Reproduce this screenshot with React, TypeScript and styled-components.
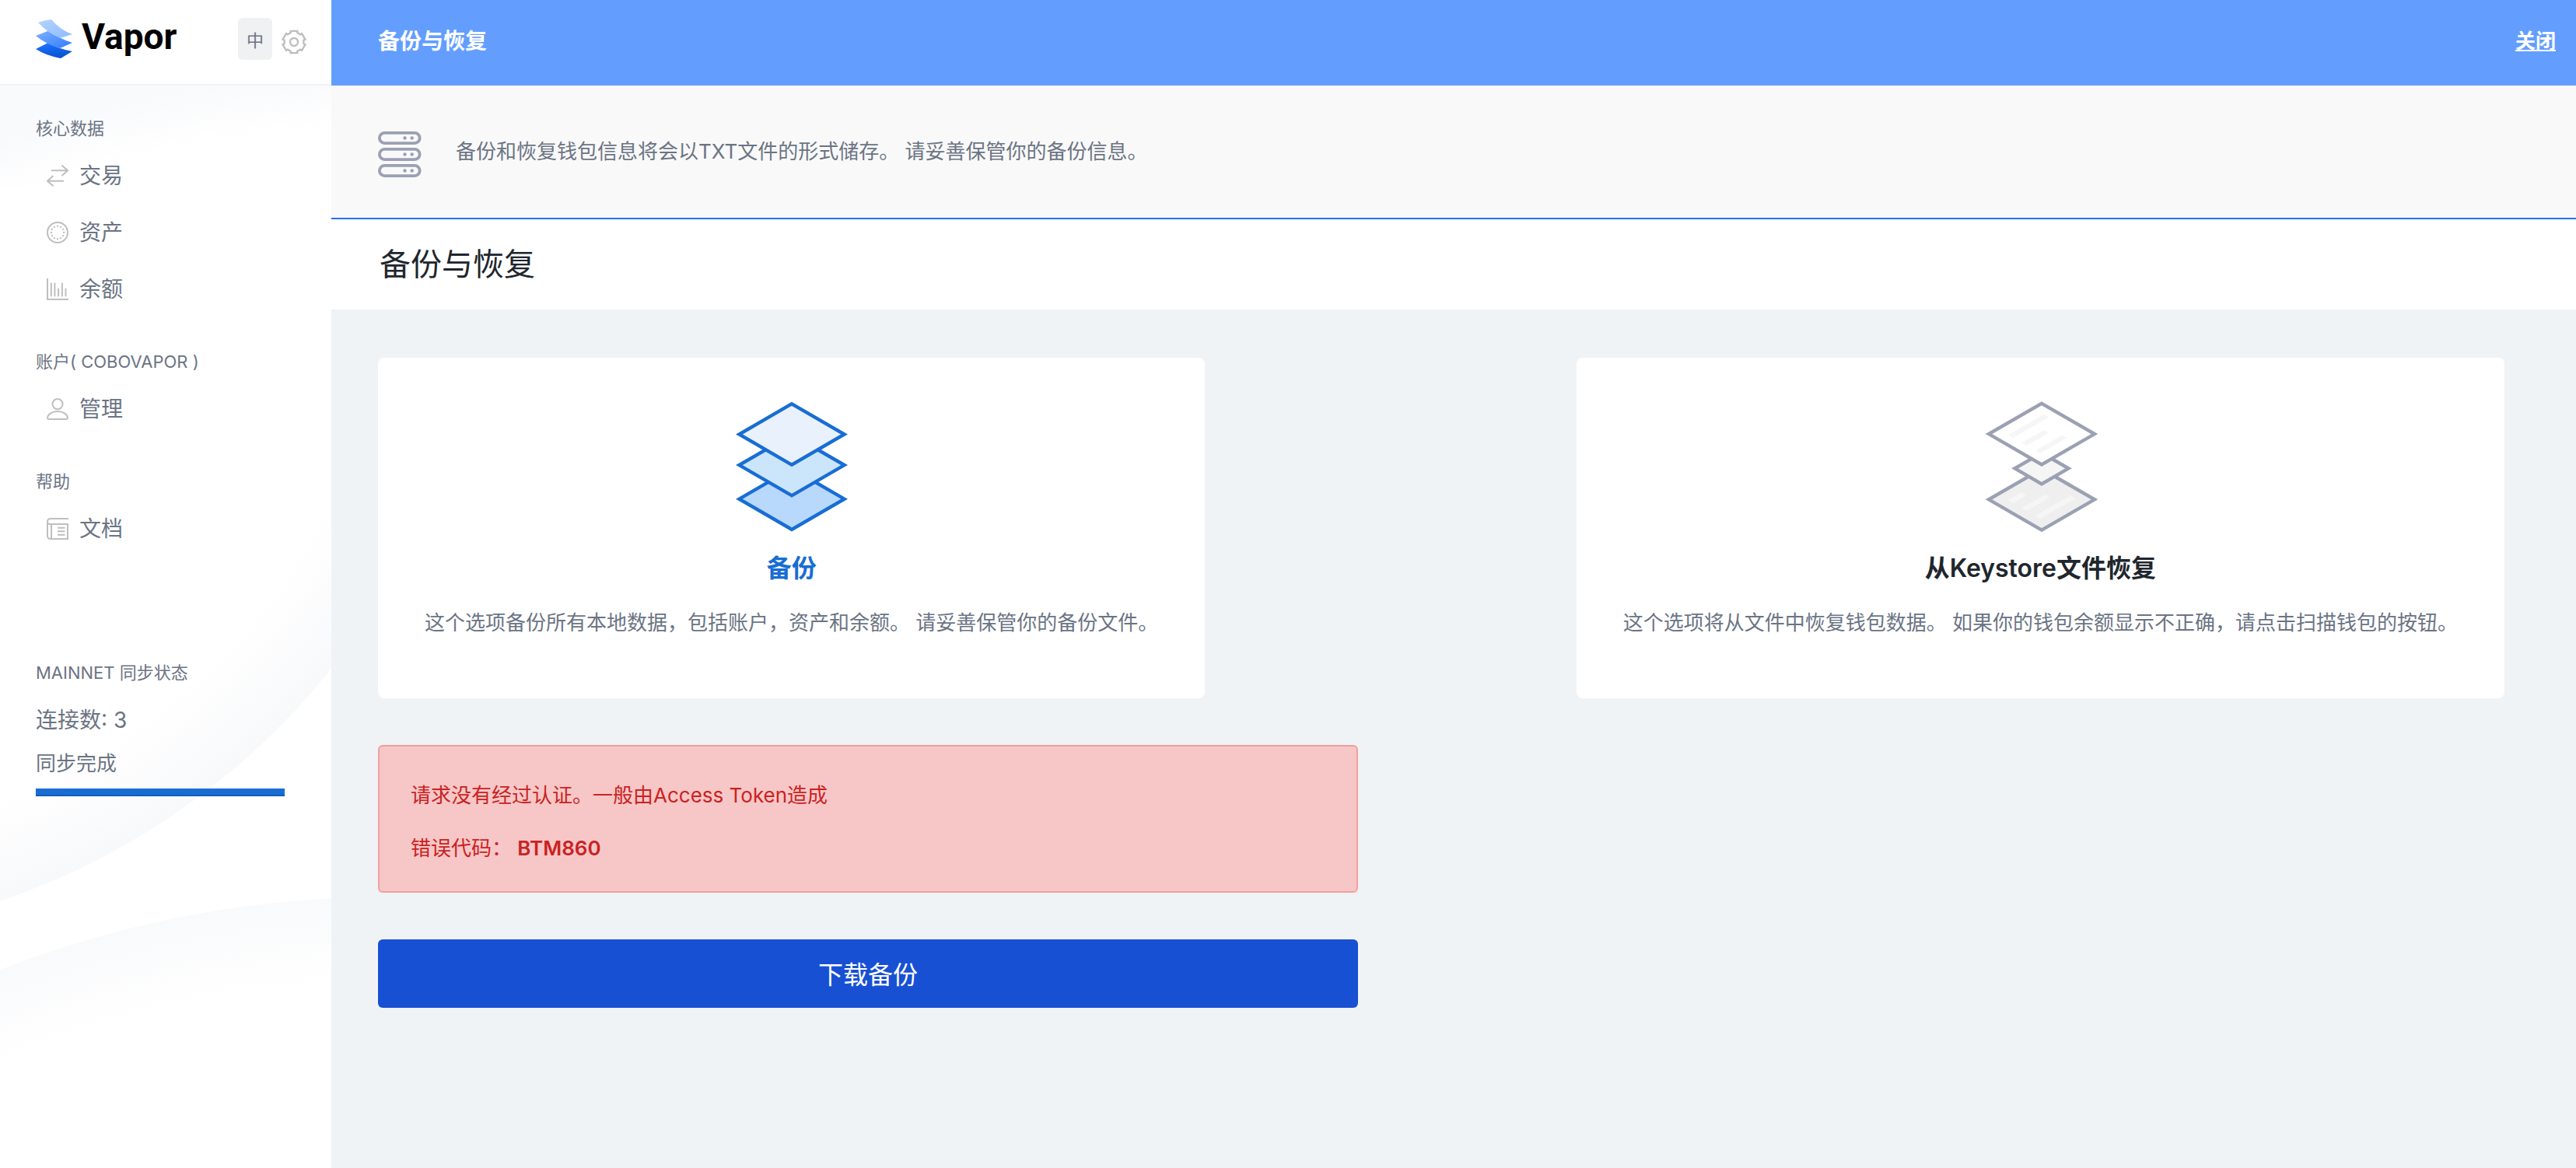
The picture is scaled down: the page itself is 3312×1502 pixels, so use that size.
import React from 'react';
import styled, { createGlobalStyle } from 'styled-components';

const GlobalStyle = createGlobalStyle`
  *, *::before, *::after { box-sizing: border-box; }
  body {
    margin: 0;
    background: #eff3f6;
    color: #6b7484;
    font-family: Inter, "Noto Sans CJK SC", sans-serif;
    font-size: 26px;
    line-height: 40px;
  }
  h1, h2, h3, p, ul { margin: 0; padding: 0; font-weight: 400; }
  ul { list-style: none; }
  button { font-family: inherit; border: 0; cursor: pointer; }
  a { color: inherit; text-decoration: none; }
  svg { display: block; flex: none; }
`;

const Shell = styled.div`
  display: flex;
  min-height: 100vh;
`;

const Sidebar = styled.aside`
  flex: 0 0 426px;
  background:
    radial-gradient(circle at 496px 1530px, transparent 1366px, #f9fafc 1436px) 0 0 / 100% 240px no-repeat,
    radial-gradient(circle at -300px 278px, transparent 810px, #f8f9fb 930px, transparent 931px),
    radial-gradient(circle at 496px 2512px, transparent 1248px, #f9fafc 1358px, transparent 1359px),
    #ffffff;
`;

const Brand = styled.header`
  display: flex;
  align-items: center;
  height: 110px;
  padding: 0 32px 8px 46px;
  background: #ffffff;
  border-bottom: 2px solid #f2f3f5;
`;

const BrandName = styled.span`
  flex: 1;
  margin-left: 12px;
  padding-bottom: 6px;
  color: #000000;
  font-family: Roboto, sans-serif;
  font-size: 46px;
  font-weight: 700;
  line-height: 54px;
`;

const LanguageButton = styled.button`
  width: 44px;
  height: 54px;
  padding: 0;
  margin-right: 12px;
  border-radius: 6px;
  background: #f0f1f3;
  color: #6b7484;
  font-size: 22px;
`;

const SettingsButton = styled.button`
  padding: 8px 0 0;
  background: none;
`;

const SideBody = styled.div`
  padding: 39px 60px 0 46px;
`;

const Section = styled.section`
  margin-bottom: 41px;
`;

const SectionLabel = styled.h2`
  margin-bottom: 8px;
  font-size: 22px;
  line-height: 32px;
`;

const NavLink = styled.a`
  display: flex;
  align-items: center;
  gap: 14px;
  height: 73px;
  padding-left: 14px;
  font-size: 28px;
`;

const Sync = styled.section`
  padding-top: 92px;
`;

const SyncLine = styled.p<{ $size: number }>`
  font-size: ${(p) => p.$size}px;
  line-height: 55px;
`;

const SyncList = styled.div`
  padding: 10px 0 5px;
`;

const Progress = styled.div`
  height: 10px;
  background: #186dd4;
  border-bottom: 2px solid #145cb3;
`;

const Main = styled.main`
  flex: 1;
  min-width: 0;
`;

const TopBar = styled.header`
  display: flex;
  justify-content: space-between;
  align-items: center;
  height: 110px;
  padding: 0 26px 4px 60px;
  background: #639eff;
  color: #ffffff;
`;

const TopTitle = styled.h1`
  font-size: 28px;
  font-weight: 700;
`;

const CloseLink = styled.a`
  font-weight: 700;
  text-decoration: underline;
`;

const Notice = styled.div`
  display: flex;
  align-items: center;
  gap: 44px;
  height: 172px;
  padding: 8px 60px 0;
  background: #f9f9f9;
  border-bottom: 2px solid #246fff;
`;

const NoticeText = styled.p`
  padding-bottom: 8px;
`;

const TitleBand = styled.div`
  padding: 28px 60px;
  background: #ffffff;
`;

const PageTitle = styled.h2`
  padding-left: 2px;
  color: #20262d;
  font-size: 40px;
  line-height: 60px;
`;

const Content = styled.div`
  display: flex;
  flex-direction: column;
  gap: 60px;
  padding: 62px 92px 60px 60px;
`;

const Options = styled.div`
  display: flex;
  justify-content: space-between;
`;

const OptionCard = styled.button`
  display: flex;
  flex-direction: column;
  align-items: center;
  padding: 56px 60px 77px;
  border-radius: 8px;
  background: #ffffff;
  color: #6b7484;
  font-size: 26px;
  line-height: 40px;
`;

const OptionTitle = styled.strong<{ $active?: boolean }>`
  margin: 23px 0 26px;
  color: ${(p) => (p.$active ? '#186dd4' : '#20262d')};
  font-size: 32px;
  font-weight: 600;
  line-height: 48px;
`;

const Alert = styled.div`
  display: flex;
  flex-direction: column;
  gap: 28px;
  max-width: 1260px;
  padding: 43px 40px 35px;
  border: 2px solid #f19e9e;
  border-radius: 6px;
  background: #f7c7c7;
  color: #ca2222;
`;

const ErrorCode = styled.strong`
  font-weight: 600;
`;

const DownloadButton = styled.button`
  width: 100%;
  max-width: 1260px;
  height: 88px;
  padding: 0 0 2px;
  border-radius: 6px;
  background: #1850d3;
  color: #ffffff;
  font-size: 32px;
`;

const ICON = '#bfbfbf';

function LogoMark() {
  return (
    <svg width="47" height="50" viewBox="0 0 47 50" aria-hidden="true">
      <defs>
        <linearGradient id="lg1" x1="0" y1="0" x2="1" y2="1">
          <stop offset="0" stopColor="#b4d3ff" />
          <stop offset="1" stopColor="#8fbbff" />
        </linearGradient>
        <linearGradient id="lg2" x1="0" y1="0" x2="1" y2="1">
          <stop offset="0" stopColor="#7fb2ff" />
          <stop offset="1" stopColor="#2f7bff" />
        </linearGradient>
        <linearGradient id="lg3" x1="0.3" y1="0" x2="0.6" y2="1">
          <stop offset="0" stopColor="#1f74fb" />
          <stop offset="1" stopColor="#0650d0" />
        </linearGradient>
      </defs>
      <path d="M0 38 L16 30 Q26 37 47 41 L32 50 Q12 46 0 38Z" fill="url(#lg3)" />
      <path d="M0 21 L18 14 Q30 25 47 30 L31 37 Q13 32 0 21Z" fill="url(#lg2)" />
      <path d="M3 4 Q11 1 20 0 Q32 14 47 19 Q38 22 31 24 Q15 17 3 4Z" fill="url(#lg1)" />
    </svg>
  );
}

function gearPath() {
  const points: string[] = [];
  for (let i = 0; i < 6; i += 1) {
    const mid = -90 + i * 60;
    [[-20, 12.6], [-17, 14.8], [17, 14.8], [20, 12.6]].forEach(([offset, radius]) => {
      const a = ((mid + offset) * Math.PI) / 180;
      points.push(`${(16 + radius * Math.cos(a)).toFixed(2)} ${(16 + radius * Math.sin(a)).toFixed(2)}`);
    });
  }
  return `M${points.join('L')}Z`;
}

function GearIcon() {
  return (
    <svg width="32" height="32" viewBox="0 0 32 32" fill="none" stroke={ICON} strokeWidth="2.4" aria-hidden="true">
      <path d={gearPath()} />
      <circle cx="16" cy="16" r="5" />
    </svg>
  );
}

const NavSvg = ({ children }: { children: React.ReactNode }) => (
  <svg width="28" height="28" viewBox="0 0 28 28" fill="none" stroke={ICON} strokeWidth="2" aria-hidden="true">
    {children}
  </svg>
);

const icons = {
  exchange: (
    <NavSvg>
      <path d="M6 7.3H27M19.5 .7 27 7.3 19.5 14M22 20.7H1M8.5 14 1 20.7 8.5 27.3" />
    </NavSvg>
  ),
  asset: (
    <NavSvg>
      <circle cx="14" cy="14" r="13" />
      <circle cx="14" cy="14" r="8.2" pathLength="48" strokeDasharray="2 2" strokeDashoffset="1" />
    </NavSvg>
  ),
  balance: (
    <NavSvg>
      <path d="M1 0V27H28M5.8 5.7V23.3M10.4 5.7V23.3M15.1 12.7V23.3M19.9 5.7V23.3M24.5 12.7V23.3" />
    </NavSvg>
  ),
  user: (
    <NavSvg>
      <circle cx="14" cy="7.6" r="6.6" />
      <path d="M1 25.6C1.6 20.4 7 17 14 17s12.4 3.4 13 8.6q0 1.4-1.2 1.4H2.2Q1 27 1 25.6Z" />
    </NavSvg>
  ),
  doc: (
    <NavSvg>
      <path d="M28 1H5Q1 1 1 5V23Q1 27 5 27H27V8H4Q1 8 1 5M6 8V27M14 12.8H23.5M14 17.3H23.5M14 21.8H23.5" />
    </NavSvg>
  ),
};

function ServerIcon() {
  return (
    <svg width="56" height="60" viewBox="0 0 56 60" fill="none" stroke="#9ba1b3" strokeWidth="3.8" aria-hidden="true">
      {[0, 21, 42].map((y) => (
        <g key={y}>
          <rect x="1.9" y={y + 1.9} width="51.8" height="13.2" rx="6.6" />
          <circle cx="34.5" cy={y + 8.5} r="2.2" fill="#9ba1b3" stroke="none" />
          <circle cx="43.7" cy={y + 8.5} r="2.2" fill="#9ba1b3" stroke="none" />
        </g>
      ))}
    </svg>
  );
}

function BackupIcon() {
  return (
    <svg width="144" height="168" viewBox="0 0 144 168" stroke="#186dd4" strokeWidth="4.4" aria-hidden="true">
      <path d="M72 86.5 139.6 125.7 72 164.9 4.4 125.7Z" fill="#b8d8fc" />
      <path d="M72 43 139.6 82.1 72 121.3 4.4 82.1Z" fill="#cbe5fa" />
      <path d="M72 3.3 139.6 42.5 72 81.7 4.4 42.5Z" fill="#e8f1fc" />
    </svg>
  );
}

function RestoreIcon() {
  return (
    <svg width="150" height="168" viewBox="-4 0 150 168" stroke="#9ba1b3" strokeWidth="4.4" aria-hidden="true">
      <path d="M73 87 141 126.3 73 165.6 5 126.3Z" fill="#efefef" />
      <g fill="#f6f6f6" stroke="none">
        <path d="M30 127 47 117 53 121 36 131ZM47 137 77.5 120 83.5 124 53.5 141ZM65 147 110 121.3 116 125.3 71 151Z" />
      </g>
      <path d="M73 66.5 107.5 86.3 73 106.5 38.5 86.3Z" fill="#f5f5f5" />
      <path d="M73 2.8 141 42.1 73 81.4 5 42.1Z" fill="#ffffff" />
      <g fill="#f6f6f6" stroke="none">
        <path d="M30 43.3 76 16.7 82 20.7 36 47.3ZM47.5 53.3 76 37 81.5 41 53.5 57.3ZM65 63.3 100 43.3 106 46.7 71 67Z" />
      </g>
    </svg>
  );
}

const sections = [
  {
    label: '核心数据',
    items: [
      { icon: icons.exchange, text: '交易' },
      { icon: icons.asset, text: '资产' },
      { icon: icons.balance, text: '余额' },
    ],
  },
  { label: '账户( COBOVAPOR )', items: [{ icon: icons.user, text: '管理' }] },
  { label: '帮助', items: [{ icon: icons.doc, text: '文档' }] },
];

export default function App() {
  return (
    <>
      <GlobalStyle />
      <Shell>
        <Sidebar>
          <Brand>
            <LogoMark />
            <BrandName>Vapor</BrandName>
            <LanguageButton type="button">中</LanguageButton>
            <SettingsButton type="button" aria-label="设置">
              <GearIcon />
            </SettingsButton>
          </Brand>
          <SideBody>
            <nav>
              {sections.map((section) => (
                <Section key={section.label}>
                  <SectionLabel>{section.label}</SectionLabel>
                  <ul>
                    {section.items.map((item) => (
                      <li key={item.text}>
                        <NavLink href="#">
                          {item.icon}
                          <span>{item.text}</span>
                        </NavLink>
                      </li>
                    ))}
                  </ul>
                </Section>
              ))}
            </nav>
            <Sync>
              <SectionLabel>MAINNET 同步状态</SectionLabel>
              <SyncList>
                <SyncLine $size={28}>连接数: 3</SyncLine>
                <SyncLine $size={26}>同步完成</SyncLine>
              </SyncList>
              <Progress role="progressbar" aria-valuenow={100} aria-label="同步完成" />
            </Sync>
          </SideBody>
        </Sidebar>
        <Main>
          <TopBar>
            <TopTitle>备份与恢复</TopTitle>
            <CloseLink href="#">关闭</CloseLink>
          </TopBar>
          <Notice>
            <ServerIcon />
            <NoticeText>备份和恢复钱包信息将会以TXT文件的形式储存。 请妥善保管你的备份信息。</NoticeText>
          </Notice>
          <TitleBand>
            <PageTitle>备份与恢复</PageTitle>
          </TitleBand>
          <Content>
            <Options>
              <OptionCard type="button" aria-pressed="true">
                <BackupIcon />
                <OptionTitle $active>备份</OptionTitle>
                <span>这个选项备份所有本地数据，包括账户，资产和余额。 请妥善保管你的备份文件。</span>
              </OptionCard>
              <OptionCard type="button" aria-pressed="false">
                <RestoreIcon />
                <OptionTitle>从Keystore文件恢复</OptionTitle>
                <span>这个选项将从文件中恢复钱包数据。 如果你的钱包余额显示不正确，请点击扫描钱包的按钮。</span>
              </OptionCard>
            </Options>
            <Alert role="alert">
              <p>请求没有经过认证。一般由Access Token造成</p>
              <p>
                错误代码： <ErrorCode>BTM860</ErrorCode>
              </p>
            </Alert>
            <DownloadButton type="button">下载备份</DownloadButton>
          </Content>
        </Main>
      </Shell>
    </>
  );
}
